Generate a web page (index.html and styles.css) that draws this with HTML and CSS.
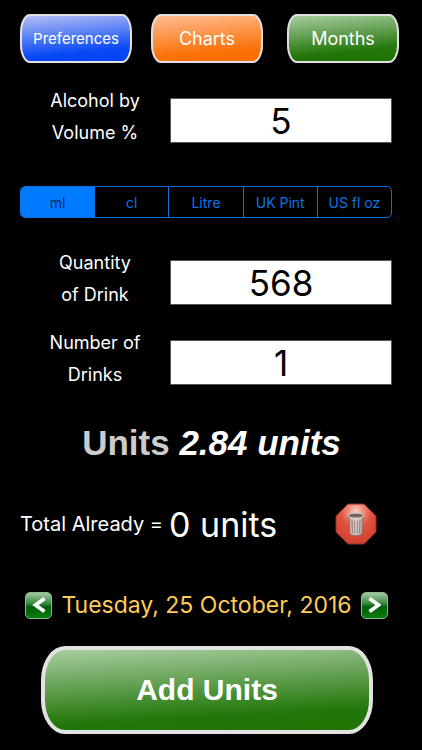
FILE: index.html
```html
<!DOCTYPE html>
<html lang="en">
<head>
<meta charset="utf-8">
<meta name="viewport" content="width=device-width, initial-scale=1">
<title>Alcohol Units</title>
<link rel="stylesheet" href="styles.css">
</head>
<body>
<main class="page">
  <nav class="tabs">
    <button class="glossy glossy-blue" type="button">Preferences</button>
    <button class="glossy glossy-orange" type="button">Charts</button>
    <button class="glossy glossy-green" type="button">Months</button>
  </nav>

  <form class="form">
    <div class="row">
      <label for="abv">Alcohol by<br>Volume %</label>
      <input class="field" id="abv" type="text" inputmode="decimal" value="5">
    </div>

    <div class="segments" role="radiogroup" aria-label="Measure">
      <label class="segment"><input type="radio" name="measure" checked><span>ml</span></label>
      <label class="segment"><input type="radio" name="measure"><span>cl</span></label>
      <label class="segment"><input type="radio" name="measure"><span>Litre</span></label>
      <label class="segment"><input type="radio" name="measure"><span>UK Pint</span></label>
      <label class="segment"><input type="radio" name="measure"><span>US fl oz</span></label>
    </div>

    <div class="row">
      <label for="quantity">Quantity<br>of Drink</label>
      <input class="field" id="quantity" type="text" inputmode="decimal" value="568">
    </div>
    <div class="row">
      <label for="drinks">Number of<br>Drinks</label>
      <input class="field" id="drinks" type="text" inputmode="numeric" value="1">
    </div>
  </form>

  <p class="result"><span class="result-label">Units</span> <em>2.84 units</em></p>

  <div class="total">
    <span class="total-label">Total Already =</span>
    <span class="total-value">0 units</span>
    <button class="icon-button trash" type="button" aria-label="Clear total">
      <svg width="44" height="44" viewBox="0 0 44 44" aria-hidden="true">
        <defs>
          <radialGradient id="stop-fill" cx="0.5" cy="0.18" r="0.8">
            <stop offset="0" stop-color="#fbd0c6"/>
            <stop offset="0.25" stop-color="#ee8876"/>
            <stop offset="0.5" stop-color="#e2513f"/>
            <stop offset="1" stop-color="#d04030"/>
          </radialGradient>
          <linearGradient id="can-fill" x1="0" x2="1" y1="0" y2="0">
            <stop offset="0" stop-color="#b9a29d"/>
            <stop offset="0.5" stop-color="#e4d8d5"/>
            <stop offset="1" stop-color="#b09994"/>
          </linearGradient>
        </defs>
        <path d="M14 2h16l12 12v16L30 42H14L2 30V14z" fill="url(#stop-fill)" stroke="#8f3026"/>
        <path d="M14.500 13l1.500 19.500q6 2.500 12 0L29.500 13z" fill="url(#can-fill)" stroke="#94665e"/>
        <path d="M18 18l.5 13M20.700 18.500l.1 13.500M23.300 18.500l-.1 13.500M26 18l-.5 13" stroke="#967c77" fill="none"/>
        <ellipse cx="22" cy="13.500" rx="7.500" ry="2.600" fill="#7b6561" stroke="#d8cbc8" stroke-width="1.200"/>
      </svg>
    </button>
  </div>

  <div class="date">
    <button class="icon-button arrow" type="button" aria-label="Previous day">
      <svg width="14" height="18" viewBox="0 0 14 18" aria-hidden="true"><path d="M12.500 2.500L3.500 9l9 6.500" fill="none" stroke="#fff" stroke-width="3.800"/></svg>
    </button>
    <time datetime="2016-10-25">Tuesday, 25 October, 2016</time>
    <button class="icon-button arrow" type="button" aria-label="Next day">
      <svg width="14" height="18" viewBox="0 0 14 18" aria-hidden="true"><path d="M2.500 2.500l9 6.500-9 6.500" fill="none" stroke="#fff" stroke-width="3.800"/></svg>
    </button>
  </div>

  <button class="add" type="button">Add Units</button>
</main>
</body>
</html>
```
FILE: styles.css
```css
* {
  box-sizing: border-box;
}

body {
  margin: 0;
  background: #000;
  color: #fff;
  font-family: Inter, "Liberation Sans", sans-serif;
}

button,
input {
  font: inherit;
}

button {
  cursor: pointer;
}

.page {
  padding: 14px 23px 16px 20px;
}

.tabs {
  display: flex;
  gap: 19px;
}

.glossy {
  width: 112px;
  height: 49px;
  padding: 0;
  border: 2px solid #e4dfe2;
  border-radius: 10px / 18px;
  color: #fff;
  font-size: 18px;
}

.glossy-blue {
  background: linear-gradient(175deg, #b4bff5 0%, #0848f5 76%, #0044f5 100%);
  font-size: 15px;
}

.glossy-orange {
  background: linear-gradient(175deg, #ffbd92 0%, #fa7108 76%, #fa6f00 100%);
}

.glossy-green {
  margin-left: auto;
  background: linear-gradient(175deg, #a9cda0 0%, #217609 76%, #1f7404 100%);
}

.form {
  padding-right: 7px;
  margin-top: 22px;
}

.row {
  display: grid;
  grid-template-columns: 150px 1fr;
  align-items: start;
  margin-bottom: 16px;
  text-align: center;
  font-size: 18px;
  line-height: 32px;
}

.field {
  width: 100%;
  height: 45px;
  margin-top: 13px;
  padding: 0;
  border: 1px solid #555;
  border-radius: 0;
  background: #fff;
  color: #000;
  font-size: 35px;
  text-align: center;
}

.segments {
  display: flex;
  height: 32px;
  margin: 37px 0 29px;
  overflow: hidden;
  border: 1px solid #0a70e0;
  border-radius: 5px;
  color: #0a74e6;
  font-size: 14px;
}

.segment {
  position: relative;
  display: flex;
  flex: 1;
}

.segment + .segment {
  border-left: 1px solid #0a70e0;
}

.segment input {
  position: absolute;
  opacity: 0;
}

.segment span {
  display: grid;
  flex: 1;
  place-items: center;
}

.segment input:checked + span {
  background: #007aff;
  color: #042a55;
}

.result {
  margin: 32px 0 0;
  padding-left: 4px;
  text-align: center;
  font: bold 35px/40px "Liberation Sans", Arial, sans-serif;
}

.result-label {
  color: #ccc;
}

.total {
  display: flex;
  align-items: center;
  gap: 6px;
  margin-top: 39px;
}

.total-label {
  font-size: 20px;
}

.total-value {
  font-size: 34px;
}

.icon-button {
  display: grid;
  place-items: center;
  padding: 0;
  border: 0;
  background: none;
}

.trash {
  margin: 0 21px 0 auto;
}

.date {
  display: flex;
  align-items: center;
  justify-content: space-between;
  margin-top: 45px;
  padding: 0 11px 0 5px;
  color: #ffcc55;
  font-size: 23px;
}

.arrow {
  width: 27px;
  height: 27px;
  border: 1px solid #8fb890;
  border-radius: 5px;
  background: linear-gradient(#a4c9a5 0%, #2f8337 45%, #00600a 55%, #087b0c 100%);
}

.add {
  display: block;
  width: calc(100% - 47px);
  height: 88px;
  margin: 27px 0 0 21px;
  border: 4px solid #e2e2e0;
  border-radius: 24px / 34px;
  background: linear-gradient(177deg, #a9cda0 0%, #217609 78%, #1f7404 100%);
  color: #fff;
  font: bold 30px "Liberation Sans", Arial, sans-serif;
}
```
